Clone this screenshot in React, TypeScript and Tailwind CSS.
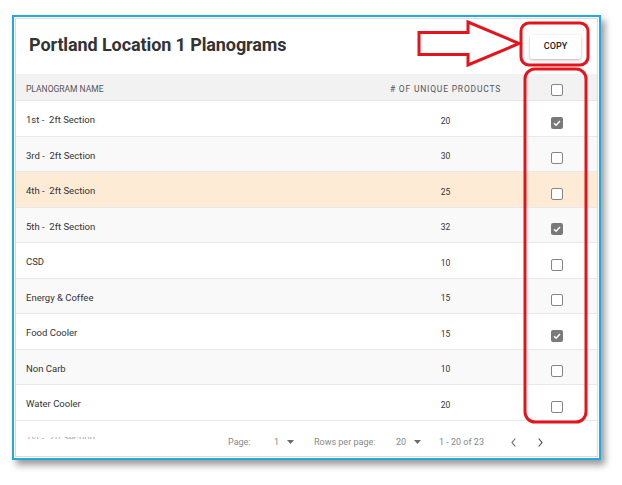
import React from "react";

const rows = [
  { name: "1st -  2ft Section", n: 20, checked: true, bg: "bg-white" },
  { name: "3rd -  2ft Section", n: 30, checked: false, bg: "bg-[#f9f9f9]" },
  { name: "4th -  2ft Section", n: 25, checked: false, bg: "bg-[#fdebd6]" },
  { name: "5th -  2ft Section", n: 32, checked: true, bg: "bg-[#f9f9f9]" },
  { name: "CSD", n: 10, checked: false, bg: "bg-white" },
  { name: "Energy & Coffee", n: 15, checked: false, bg: "bg-[#f9f9f9]" },
  { name: "Food Cooler", n: 15, checked: true, bg: "bg-white" },
  { name: "Non Carb", n: 10, checked: false, bg: "bg-[#f9f9f9]" },
  { name: "Water Cooler", n: 20, checked: false, bg: "bg-white" },
];

function Box({ checked }: { checked: boolean }) {
  if (checked) {
    return (
      <div className="w-[12px] h-[12px] rounded-[2px] bg-[#7a7a7a] flex items-center justify-center">
        <svg width="10" height="10" viewBox="0 0 10 10">
          <path d="M2 5.2 L4.1 7.2 L8 3" stroke="white" strokeWidth="1.4" fill="none" />
        </svg>
      </div>
    );
  }
  return <div className="w-[12px] h-[12px] rounded-[2px] border-[1.5px] border-[#858585] bg-white" />;
}

function Caret() {
  return (
    <svg width="7" height="4" viewBox="0 0 7 4" className="ml-[8px]">
      <path d="M0 0 L7 0 L3.5 4 Z" fill="#6b6b6b" />
    </svg>
  );
}

export default function App() {
  return (
    <div
      className="relative w-[622px] h-[485px] bg-white pl-[12px] pt-[15px]"
      style={{ fontFamily: "Roboto, 'Liberation Sans', sans-serif" }}
    >
      <div className="w-[589px] h-[445px] border-2 border-[#23a8e0] p-[1px] bg-white shadow-[4px_5px_7px_rgba(0,0,0,0.4)]">
        <div className="w-full h-full border border-[#dcdcdc] flex flex-col overflow-hidden">
          <div className="h-[55px] flex items-center pl-[13px] pr-[16px] shrink-0">
            <div className="text-[18px] font-bold text-[#333] flex-1 tracking-[-0.1px] pb-[4px]">Portland Location 1 Planograms</div>
            <div className="w-[51px] h-[24px] bg-white shadow-[0_1px_3px_rgba(0,0,0,0.3)] rounded-[2px] flex items-center justify-center text-[9px] font-medium text-[#222]">
              COPY
            </div>
          </div>
          <div className="h-[27px] bg-[#f2f2f2] flex items-center text-[8.5px] text-[#555] border-b border-[#e6e6e6] shrink-0">
            <div className="flex-1 pl-[10px] pt-[4px]">PLANOGRAM NAME</div>
            <div className="w-[141px] text-center pt-[4px] tracking-[0.8px]">
              # OF UNIQUE PRODUCTS
            </div>
            <div className="w-[81px] flex justify-center pt-[5px]">
              <Box checked={false} />
            </div>
          </div>
          {rows.map((r, i) => (
            <div
              key={i}
              className={`h-[35.5px] flex items-center border-b border-[#e8e8e8] shrink-0 ${r.bg}`}
            >
              <div className="flex-1 pl-[10px] text-[9.5px] text-[#333] pt-[4px] whitespace-pre">{r.name}</div>
              <div className="w-[141px] text-center text-[8.5px] text-[#333] pt-[6px]">{r.n}</div>
              <div className="w-[81px] flex justify-center pt-[9px]">
                <Box checked={r.checked} />
              </div>
            </div>
          ))}
          <div className="h-[35.5px] flex items-center text-[9px] text-[#888] shrink-0 pt-[8px]">
            <div className="w-[212px] pl-[10px] h-[2px] overflow-hidden mt-[-8px]">
              <div className="text-[9.5px] text-[#aaa] leading-[10px] mt-[-4px] whitespace-pre">1st -  2ft Section</div>
            </div>
            <div className="w-[46px]">Page:</div>
            <div className="w-[40px] flex items-center">
              <span>1</span>
              <Caret />
            </div>
            <div className="w-[82px]">Rows per page:</div>
            <div className="w-[43px] flex items-center">
              <span>20</span>
              <Caret />
            </div>
            <div className="w-[72px]">1 - 20 of 23</div>
            <div className="w-[27px] flex items-center">
              <svg width="5" height="9" viewBox="0 0 5 9">
                <path d="M4.3 0.5 L1 4.5 L4.3 8.5" stroke="#666" strokeWidth="1.1" fill="none" />
              </svg>
            </div>
            <div className="flex items-center">
              <svg width="5" height="9" viewBox="0 0 5 9">
                <path d="M0.7 0.5 L4 4.5 L0.7 8.5" stroke="#444" strokeWidth="1.1" fill="none" />
              </svg>
            </div>
          </div>
        </div>
      </div>
      <svg
        className="absolute left-0 top-0 pointer-events-none"
        width="622"
        height="485"
        viewBox="0 0 622 485"
      >
        <polygon
          points="419,32.5 468,32.5 468,22 519,43.5 468,65 468,54.5 419,54.5"
          fill="none"
          stroke="#e5141c"
          strokeWidth="3"
          strokeLinejoin="miter"
        />
        <rect x="521" y="23" width="67" height="42" rx="8" fill="none" stroke="#e5141c" strokeWidth="3" />
        <rect x="525" y="69" width="61" height="353" rx="10" fill="none" stroke="#e5141c" strokeWidth="3" />
      </svg>
    </div>
  );
}
